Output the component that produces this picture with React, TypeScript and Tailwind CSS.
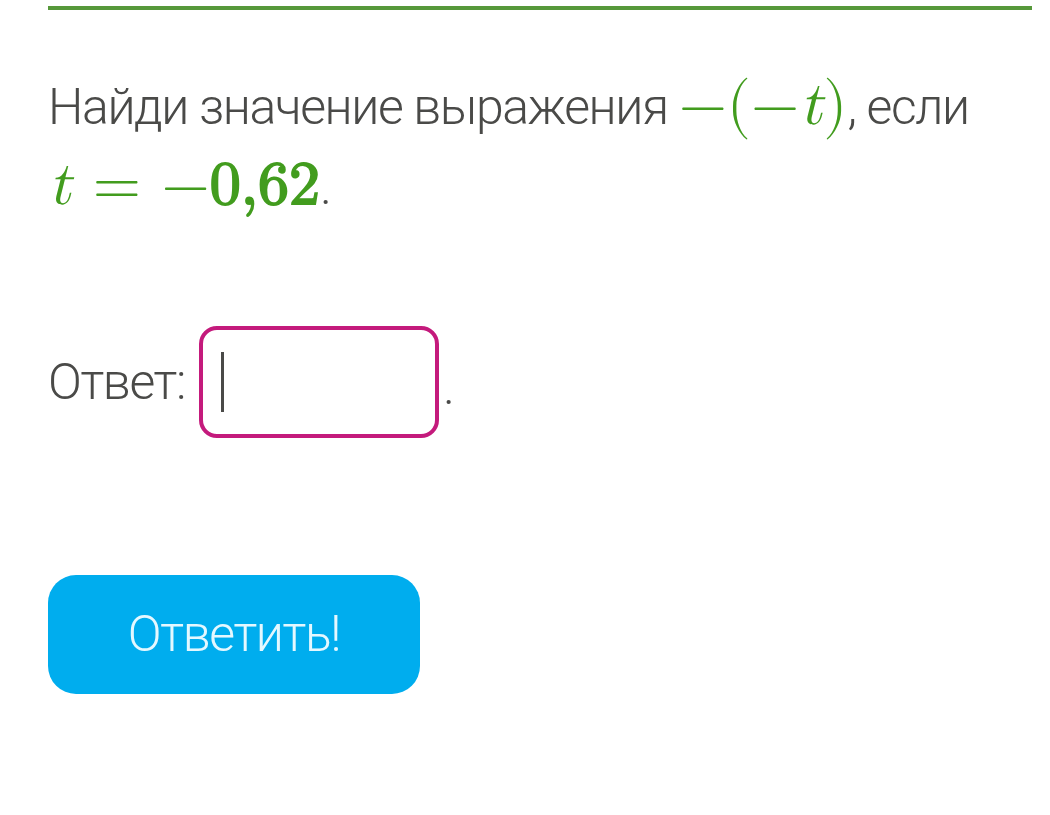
import React from 'react';

const Green: React.FC<{ children: React.ReactNode; className?: string }> = ({ children, className = '' }) => (
  <span
    className={`text-[62px] tracking-normal text-[#429c1e] ${className}`}
    style={{ fontFamily: '"Latin Modern Math", "DejaVu Serif", "Liberation Serif", serif' }}
  >
    {children}
  </span>
);

export default function App() {
  return (
    <div
      className="min-h-[815px] w-[1050px] bg-white pt-[6px] text-[#4a4a48]"
      style={{ fontFamily: '"Roboto Light", Roboto, "Noto Sans", sans-serif' }}
    >
      <div className="mx-[48px] h-[4px] w-[984px] bg-[#56983a]" />

      <div className="ml-[48px] mt-[56px] text-[50px] font-light leading-[78px] tracking-[-1.4px]">
        <div className="whitespace-nowrap">
          Найди значение выражения{' '}
          <Green>
            −(−<i>t</i>)
          </Green>
          , если
        </div>
        <div className="whitespace-nowrap">
          <Green>
            <i>t</i> = −<span className="font-bold">0,62</span>
          </Green>
          .
        </div>
      </div>

      <div className="ml-[48px] mt-[100px] flex items-center text-[50px] font-light tracking-[-1.4px]">
        <span>Ответ:</span>
        <div className="ml-[14px] flex h-[112px] w-[240px] items-center rounded-[18px] border-[4px] border-[#c41a7c] pl-[18px]">
          <div className="h-[60px] w-[3px] bg-[#4a4a48]" />
        </div>
        <span className="ml-[4px] self-end pb-[26px] leading-none">.</span>
      </div>

      <button className="ml-[48px] mt-[137px] flex h-[119px] w-[372px] items-center justify-center rounded-[28px] bg-[#00adee] text-[50px] font-light tracking-[-1.4px] text-[#e4f8ff]">
        Ответить!
      </button>
    </div>
  );
}
